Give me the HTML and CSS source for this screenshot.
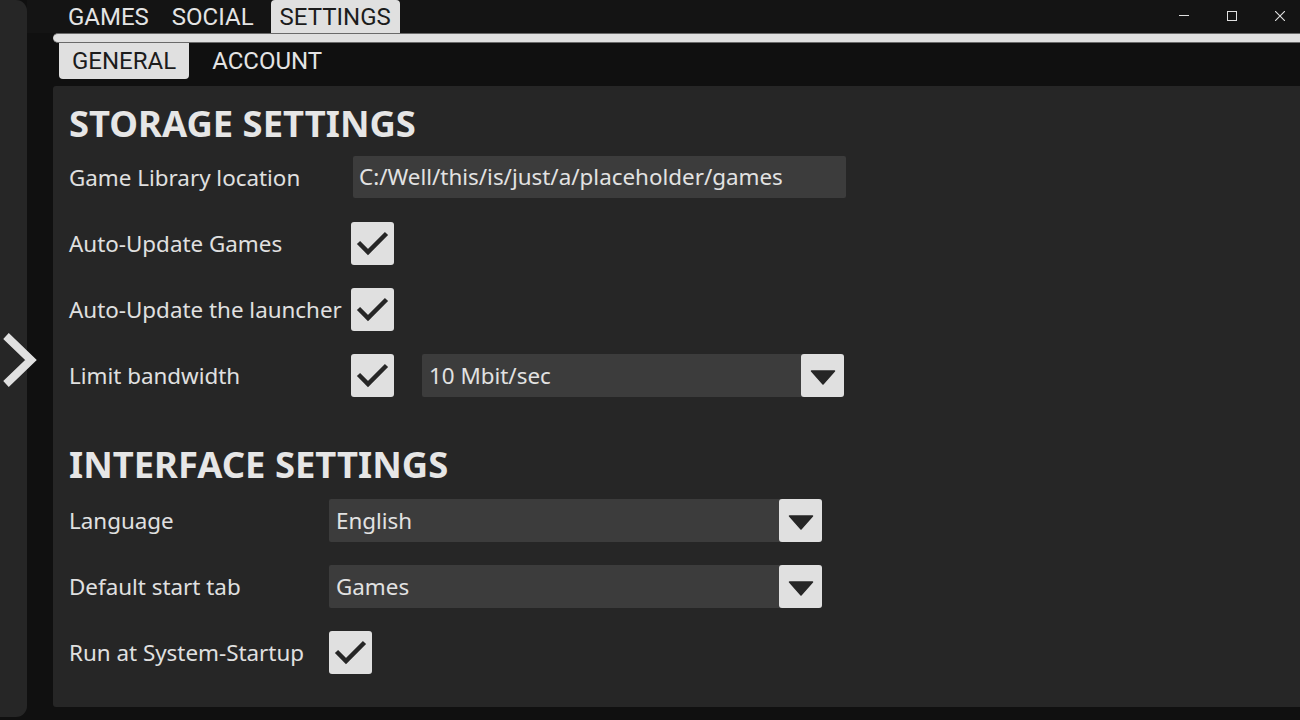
FILE: index.html
```html
<!DOCTYPE html>
<html>
<head>
<meta charset="utf-8">
<link rel="stylesheet" href="styles.css">
</head>
<body>
<div class="app">
  <aside class="side">
    <button class="side-toggle" aria-label="Expand">
      <svg width="40" height="60" viewBox="0 0 40 60"><polyline points="6,6 31,30 6,54" fill="none" stroke="#e0e0e0" stroke-width="8" stroke-linejoin="miter"/></svg>
    </button>
  </aside>
  <div class="main">
    <header class="topbar">
      <nav class="tabs">
        <span class="tab">GAMES</span>
        <span class="tab">SOCIAL</span>
        <span class="tab active">SETTINGS</span>
      </nav>
      <div class="winctl">
        <svg width="10" height="10" viewBox="0 0 10 10"><line x1="0" y1="4.5" x2="10" y2="4.5" stroke="#e0e0e0" stroke-width="1"/></svg>
        <svg width="10" height="10" viewBox="0 0 10 10"><rect x="0.5" y="0.5" width="9" height="9" fill="none" stroke="#e0e0e0" stroke-width="1"/></svg>
        <svg width="10" height="10" viewBox="0 0 10 10"><path d="M0 0 L10 10 M10 0 L0 10" stroke="#e0e0e0" stroke-width="1.1"/></svg>
      </div>
    </header>
    <div class="tabline"></div>
    <nav class="subtabs">
      <span class="subtab active">GENERAL</span>
      <span class="subtab">ACCOUNT</span>
    </nav>
    <section class="panel">
      <h2 class="heading">STORAGE SETTINGS</h2>
      <div class="grid storage">
        <div class="label">Game Library location</div>
        <div class="field"><div class="input">C:/Well/this/is/just/a/placeholder/games</div></div>

        <div class="label">Auto-Update Games</div>
        <div class="field"><span class="check"><svg width="43" height="43" viewBox="0 0 43 43"><polyline points="7.5,20.5 17,30 35.5,11.5" fill="none" stroke="#262626" stroke-width="4.5"/></svg></span></div>

        <div class="label">Auto-Update the launcher</div>
        <div class="field"><span class="check"><svg width="43" height="43" viewBox="0 0 43 43"><polyline points="7.5,20.5 17,30 35.5,11.5" fill="none" stroke="#262626" stroke-width="4.5"/></svg></span></div>

        <div class="label">Limit bandwidth</div>
        <div class="field">
          <span class="check"><svg width="43" height="43" viewBox="0 0 43 43"><polyline points="7.5,20.5 17,30 35.5,11.5" fill="none" stroke="#262626" stroke-width="4.5"/></svg></span>
          <div class="select bw">
            <span class="select-value">10 Mbit/sec</span>
            <span class="select-btn"><svg width="43" height="43" viewBox="0 0 43 43"><path d="M10.5 17 L33.5 17 L22 30 Z" fill="#262626" stroke="#262626" stroke-width="1.5" stroke-linejoin="round"/></svg></span>
          </div>
        </div>
      </div>

      <h2 class="heading second">INTERFACE SETTINGS</h2>
      <div class="grid interface">
        <div class="label">Language</div>
        <div class="field">
          <div class="select wide">
            <span class="select-value">English</span>
            <span class="select-btn"><svg width="43" height="43" viewBox="0 0 43 43"><path d="M10.5 17 L33.5 17 L22 30 Z" fill="#262626" stroke="#262626" stroke-width="1.5" stroke-linejoin="round"/></svg></span>
          </div>
        </div>

        <div class="label">Default start tab</div>
        <div class="field">
          <div class="select wide">
            <span class="select-value">Games</span>
            <span class="select-btn"><svg width="43" height="43" viewBox="0 0 43 43"><path d="M10.5 17 L33.5 17 L22 30 Z" fill="#262626" stroke="#262626" stroke-width="1.5" stroke-linejoin="round"/></svg></span>
          </div>
        </div>

        <div class="label">Run at System-Startup</div>
        <div class="field"><span class="check"><svg width="43" height="43" viewBox="0 0 43 43"><polyline points="7.5,20.5 17,30 35.5,11.5" fill="none" stroke="#262626" stroke-width="4.5"/></svg></span></div>
      </div>
    </section>
  </div>
</div>
</body>
</html>
```

FILE: styles.css
```css
* { box-sizing: border-box; }
html, body {
  margin: 0;
  padding: 0;
  width: 1300px;
  height: 720px;
  overflow: hidden;
  background: #101010;
}
.app {
  display: flex;
  height: 720px;
}
.side {
  position: relative;
  width: 27px;
  height: 717px;
  background: #262626;
  border-radius: 0 11px 11px 0;
  flex: none;
}
.side-toggle {
  position: absolute;
  left: 0;
  top: 330px;
  width: 40px;
  height: 60px;
  padding: 0;
  border: 0;
  background: none;
}
.side-toggle svg { display: block; }
.main {
  margin-left: 26px;
  flex: 1;
  display: flex;
  flex-direction: column;
}
.topbar {
  height: 33px;
  background: #141414;
  display: flex;
  justify-content: space-between;
  align-items: stretch;
  margin-left: -26px;
  padding-left: 26px;
}
.tabs {
  display: flex;
  padding-left: 5px;
  gap: 3px;
}
.tab {
  font-family: Roboto, "Liberation Sans", sans-serif;
  font-size: 24px;
  color: #e4e4e4;
  padding: 0 10px;
  line-height: 34px;
  border-radius: 4px 4px 0 0;
}
.tab.active {
  background: #e0e0e0;
  color: #1c1c1c;
  margin-left: 4px;
  padding: 0 9px 0 9px;
}
.winctl {
  display: flex;
  align-items: flex-start;
  gap: 38px;
  padding-top: 11px;
  padding-right: 15px;
}
.winctl svg { display: block; }
.tabline {
  height: 10px;
  background: #e0e0e0;
  border-top: 1px solid #6a6a6a;
  border-bottom: 1px solid #6a6a6a;
  border-left: 0;
  border-radius: 5px 0 0 5px;
}
.subtabs {
  display: flex;
  height: 36px;
  padding-left: 6px;
  gap: 10px;
}
.subtab {
  font-family: Roboto, "Liberation Sans", sans-serif;
  font-size: 24px;
  color: #e4e4e4;
  padding: 0 13px;
  line-height: 36px;
  border-radius: 0 0 4px 4px;
}
.subtab.active {
  background: #e0e0e0;
  color: #1c1c1c;
}
.panel {
  margin-top: 7px;
  height: 621px;
  background: #262626;
  border-radius: 3px 0 0 3px;
  padding: 17px 0 0 16px;
  font-family: "Noto Sans", "Open Sans", sans-serif;
  color: #e0e0e0;
}
.heading {
  margin: 0;
  font-family: "Noto Sans", "Open Sans", sans-serif;
  font-weight: 700;
  font-size: 36.4px;
  line-height: 40px;
  color: #e6e6e6;
  height: 40px;
}
.heading.second {
  margin-top: 47px;
}
.grid {
  display: grid;
  row-gap: 23px;
  grid-auto-rows: 43px;
  margin-top: 13px;
}
.grid.storage { grid-template-columns: 282px auto; }
.grid.interface { grid-template-columns: 260px auto; margin-top: 15px; }
.label {
  font-size: 22.4px;
  display: flex;
  align-items: center;
  padding-bottom: 0;
  color: #e0e0e0;
}
.field {
  display: flex;
  align-items: center;
  gap: 28px;
}
.input {
  margin-left: 2px;
  width: 493px;
  height: 42px;
  align-self: flex-start;
  background: #3c3c3c;
  border-radius: 2px;
  font-size: 22.4px;
  line-height: 42px;
  padding-left: 6px;
  color: #e2e2e2;
}
.check {
  width: 43px;
  height: 43px;
  background: #e0e0e0;
  border-radius: 3px;
  flex: none;
}
.check svg { display: block; }
.select {
  display: flex;
  height: 43px;
  background: #3c3c3c;
  border-radius: 2px;
}
.select.bw { width: 422px; }
.select.wide { width: 493px; }
.select-value {
  flex: 1;
  font-size: 22.4px;
  line-height: 43px;
  padding-left: 7px;
  color: #e2e2e2;
}
.select-btn {
  width: 43px;
  height: 43px;
  background: #e0e0e0;
  border-radius: 3px;
}
.select-btn svg { display: block; }
```
